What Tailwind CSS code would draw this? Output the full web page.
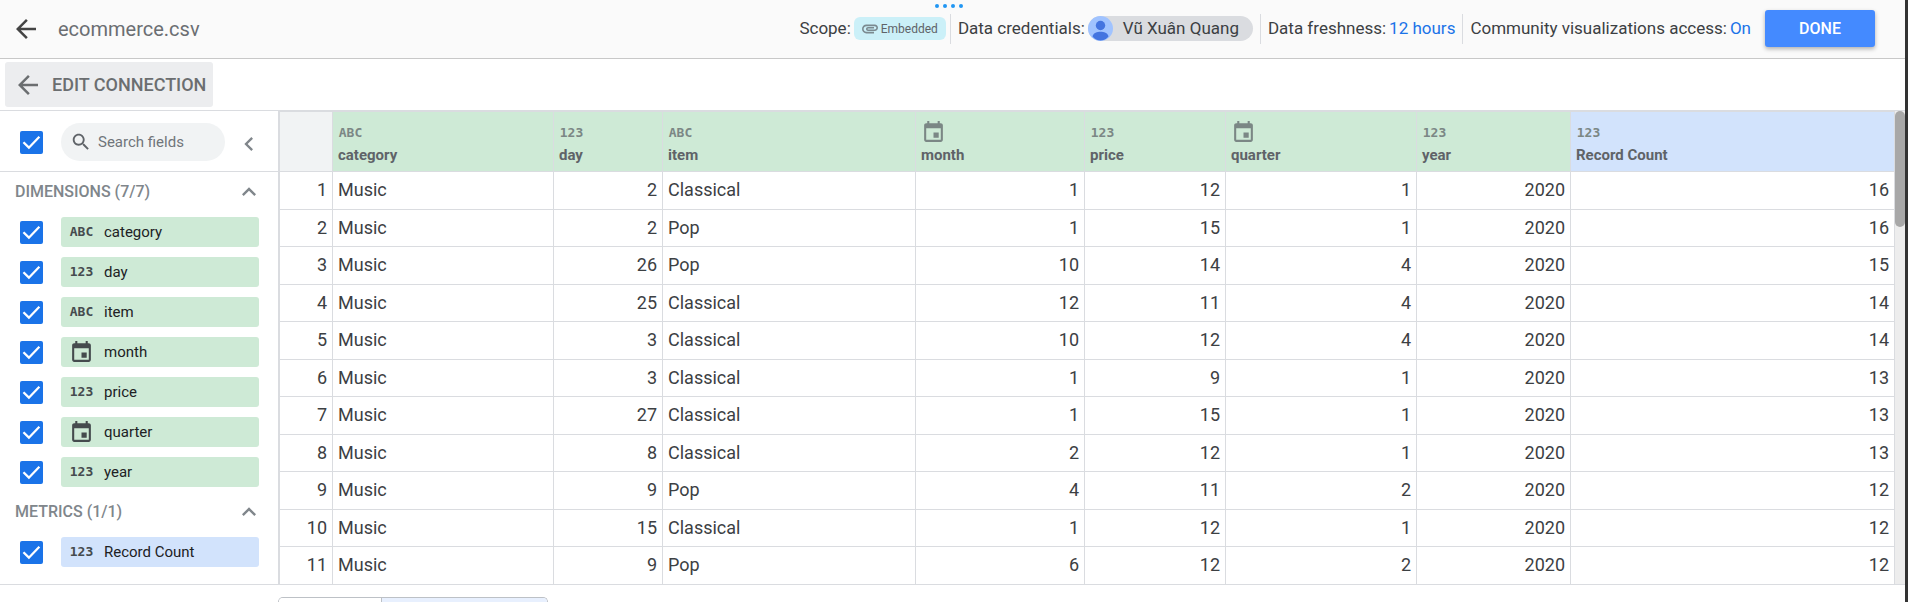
<!DOCTYPE html>
<html lang="en">
<head>
<meta charset="utf-8">
<title>ecommerce.csv</title>
<script src="https://cdn.jsdelivr.net/npm/@tailwindcss/browser@4"></script>
</head>
<body class="flex h-screen overflow-hidden bg-[#333] pr-[3px] font-['Roboto',sans-serif] text-[#3c4043]">
<svg class="hidden" aria-hidden="true">
  <symbol id="back" viewBox="0 0 24 24"><path d="M20 11H7.830l5.590-5.590L12 4l-8 8 8 8 1.410-1.410L7.830 13H20v-2z"/></symbol>
  <symbol id="calendar" viewBox="0 0 24 24"><path d="M17 12h-5v5h5v-5zM16 1v2H8V1H6v2H5c-1.110 0-1.990.9-1.990 2L3 19c0 1.100.890 2 2 2h14c1.100 0 2-.9 2-2V5c0-1.100-.9-2-2-2h-1V1h-2zm3 18H5V8h14v11z"/></symbol>
  <symbol id="up" viewBox="0 0 24 24"><path d="M12 8l-6 6 1.410 1.410L12 10.830l4.590 4.580L18 14z"/></symbol>
  <symbol id="left" viewBox="0 0 24 24"><path d="M15.410 7.410L14 6l-6 6 6 6 1.410-1.410L10.830 12z"/></symbol>
  <symbol id="search" viewBox="0 0 24 24"><path d="M15.500 14h-.79l-.28-.27C15.410 12.590 16 11.110 16 9.500 16 5.910 13.090 3 9.500 3S3 5.910 3 9.500 5.910 16 9.500 16c1.610 0 3.090-.59 4.230-1.570l.27.28v.79l5 4.990L20.490 19l-4.990-5zm-6 0C7.010 14 5 11.990 5 9.500S7.010 5 9.500 5 14 7.010 14 9.500 11.990 14 9.500 14z"/></symbol>
  <symbol id="clip" viewBox="2 4 20 17"><path d="M2 12.500C2 9.460 4.460 7 7.500 7H18c2.210 0 4 1.790 4 4s-1.790 4-4 4H9.500C8.120 15 7 13.880 7 12.500S8.120 10 9.500 10H17v2H9.410c-.55 0-.55 1 0 1H18c1.100 0 2-.9 2-2s-.9-2-2-2H7.500C5.570 9 4 10.570 4 12.500S5.570 16 7.500 16H17v2H7.500C4.460 18 2 15.540 2 12.500z"/></symbol>
  <symbol id="tick" viewBox="0 0 24 24"><path d="M3.600 11.700l5.700 5.700L20.200 6" fill="none" stroke="#fff" stroke-width="2.400"/></symbol>
</svg>

<div class="flex min-w-0 flex-1 flex-col bg-white">
  <header class="relative flex h-[59px] shrink-0 items-center border-b border-[#c8c8c8] bg-[#fafafa] pr-[30px] pb-px pl-3">
    <div class="absolute top-1 left-1/2 flex -translate-x-1/2 gap-1 pr-2" aria-hidden="true">
      <i class="size-1 rounded-full bg-[#2196f3]"></i><i class="size-1 rounded-full bg-[#2196f3]"></i><i class="size-1 rounded-full bg-[#2196f3]"></i><i class="size-1 rounded-full bg-[#2196f3]"></i>
    </div>
    <button aria-label="Back" class="flex size-7 items-center justify-center"><svg class="size-[30px] shrink-0 fill-[#444]"><use href="#back"/></svg></button>
    <h1 class="ml-[18px] text-xl text-[#6b6e72]">ecommerce.csv</h1>
    <div class="ml-auto flex items-center text-[17px] whitespace-nowrap">
      <div class="flex h-[30px] items-center gap-[3px] border-r border-[#dadce0] pr-1">
        <span>Scope:</span>
        <span class="flex h-[23px] items-center gap-[3px] rounded-md bg-[#cbf0f8] px-2 text-xs text-[#5f6368]"><svg class="size-4 fill-[#7b8a90]"><use href="#clip"/></svg>Embedded</span>
      </div>
      <div class="flex h-[30px] items-center gap-[3px] border-r border-[#dadce0] px-[7px]">
        <span>Data credentials:</span>
        <span class="flex h-[25px] items-center gap-[10px] rounded-full bg-[#dadce0] pr-[14px]">
          <svg class="size-[25px] rounded-full" viewBox="0 0 25 25"><path fill="#a0c3ff" d="M0 0h25v25H0z"/><circle cx="12.500" cy="9.500" r="4.700" fill="#4374e0"/><path fill="#4374e0" d="M4.500 20.500c1-4 4.500-4.800 8-4.800s7 .8 8 4.800c-2 2.700-5 4-8 4s-6-1.300-8-4z"/></svg>
          Vũ Xuân Quang
        </span>
      </div>
      <div class="flex h-[30px] items-center gap-[3px] border-r border-[#dadce0] px-[7px]"><span>Data freshness:</span><a href="#" class="text-[#1a73e8]">12 hours</a></div>
      <div class="flex h-[30px] items-center gap-[3px] pr-[14px] pl-[7px]"><span>Community visualizations access:</span><a href="#" class="text-[#1a73e8]">On</a></div>
      <button class="h-[37px] w-[110px] rounded-[3px] bg-[#448aff] text-base font-medium text-white shadow-[0_2px_4px_rgba(0,0,0,0.3)]">DONE</button>
    </div>
  </header>

  <div class="flex h-[51px] shrink-0 items-center px-[5px]">
    <button class="flex h-[45px] items-center gap-[9px] rounded-[3px] bg-[#ecedef] pr-[7px] pl-2 text-lg font-medium text-[#6b6e70]"><svg class="size-[30px] fill-[#6b6e70]"><use href="#back"/></svg>EDIT CONNECTION</button>
  </div>

  <main class="flex h-[475px] shrink-0 border-y border-[#dadce0]">
    <aside class="w-[280px] shrink-0 border-r-2 border-[#dadce0]">
      <div class="flex h-[61px] items-center border-b border-[#dadce0] pt-[2px] pl-5">
        <label class="grid size-[23px] place-items-center"><input type="checkbox" checked aria-label="Select all fields" class="col-start-1 row-start-1 size-[23px] appearance-none rounded-[2px] bg-[#1a73e8]"><svg class="pointer-events-none col-start-1 row-start-1 size-[23px]"><use href="#tick"/></svg></label>
        <label class="ml-[18px] flex h-[38px] w-[164px] items-center rounded-full bg-[#f1f3f4] pl-[9px]">
          <svg class="size-[22px] shrink-0 fill-[#5f6368]"><use href="#search"/></svg>
          <input type="text" aria-label="Search fields" placeholder="Search fields" class="ml-1.5 w-full min-w-0 bg-transparent text-[15px] outline-none placeholder:text-[#70757a]">
        </label>
        <button aria-label="Collapse panel" class="ml-[10px] pt-1"><svg class="size-7 fill-[#80868b]"><use href="#left"/></svg></button>
      </div>
      <div class="flex h-10 items-center justify-between pr-[15px] pl-[15px] text-base font-medium text-[#80868b]"><h2>DIMENSIONS (7/7)</h2><button aria-label="Collapse dimensions"><svg class="size-[28px] fill-[#80868b]"><use href="#up"/></svg></button></div>
      <div id="dimensions"></div>
      <div class="flex h-10 items-center justify-between pr-[15px] pl-[15px] text-base font-medium text-[#80868b]"><h2>METRICS (1/1)</h2><button aria-label="Collapse metrics"><svg class="size-[28px] fill-[#80868b]"><use href="#up"/></svg></button></div>
      <div id="metrics"></div>
    </aside>
    <div class="min-w-0 flex-1">
      <table class="w-full table-fixed border-separate border-spacing-0 text-lg">
        <colgroup><col class="w-[53px]"><col class="w-[221px]"><col class="w-[109px]"><col class="w-[253px]"><col class="w-[169px]"><col class="w-[141px]"><col class="w-[191px]"><col class="w-[154px]"><col></colgroup>
        <thead><tr id="head"></tr></thead>
        <tbody id="rows"></tbody>
      </table>
    </div>
    <div class="w-[10px] shrink-0 bg-[#ededed]"><div class="h-[116px] rounded-full bg-[#a8a8a8]"></div></div>
  </main>

  <div class="mt-3 ml-[278px] flex min-h-0 w-[270px] flex-1 overflow-hidden rounded-t-md border border-b-0 border-[#bdc1c6]">
    <button aria-label="First view" class="w-[103px] border-r border-[#bdc1c6] bg-white"></button>
    <button aria-label="Second view" class="flex-1 bg-[#e8f0fe]"></button>
  </div>
</div>

<script>
const fields = [['category','ABC'],['day','123'],['item','ABC'],['month','cal'],['price','123'],['quarter','cal'],['year','123'],['Record Count','123']];
const icon = t => t === 'cal'
  ? '<svg class="size-[25px] fill-current"><use href="#calendar"/></svg>'
  : `<span class="font-['DejaVu_Sans_Mono',monospace] text-[13px] font-bold">${t}</span>`;
const fieldRow = ([name, type], color) => `
  <label class="flex h-10 items-center pr-[19px] pl-5">
    <span class="grid size-[23px] shrink-0 place-items-center"><input type="checkbox" checked class="col-start-1 row-start-1 size-[23px] appearance-none rounded-[2px] bg-[#1a73e8]"><svg class="pointer-events-none col-start-1 row-start-1 size-[23px]"><use href="#tick"/></svg></span>
    <span class="ml-[18px] flex h-[30px] flex-1 items-center gap-[10px] rounded-[3px] pl-2 text-[15px] text-[#202124] ${color}"><span class="flex w-[25px] items-center justify-center text-[#454b4e]">${icon(type)}</span>${name}</span>
  </label>`;
document.getElementById('dimensions').innerHTML = fields.slice(0, 7).map(f => fieldRow(f, 'bg-[#ceead6]')).join('');
document.getElementById('metrics').innerHTML = fieldRow(fields[7], 'bg-[#d2e3fc]');

document.getElementById('head').innerHTML =
  '<td class="h-[61px] border-t border-r border-b border-[#dadce0] bg-[#f1f3f4]"></td>' +
  fields.map(([name, type], i) => `
  <th scope="col" class="h-[61px] border-t border-r border-b border-[#dadce0] pl-[5px] text-left align-top text-[15px] leading-5 font-bold text-[#5f6368] ${i < 7 ? 'bg-[#ceead6]' : 'bg-[#d2e3fc]'}">
    <div class="mt-2 flex h-[25px] w-[25px] items-center justify-center text-[#7b8785]">${icon(type)}</div><div>${name}</div></th>`).join('');

const data = [
  [2,'Classical',1,12,1,16],[2,'Pop',1,15,1,16],[26,'Pop',10,14,4,15],[25,'Classical',12,11,4,14],
  [3,'Classical',10,12,4,14],[3,'Classical',1,9,1,13],[27,'Classical',1,15,1,13],[8,'Classical',2,12,1,13],
  [9,'Pop',4,11,2,12],[15,'Classical',1,12,1,12],[9,'Pop',6,12,2,12]];
document.getElementById('rows').innerHTML = data.map(([day, item, month, price, quarter, count], i) =>
  `<tr class="${i % 2 ? 'h-[37px]' : 'h-[38px]'}">` +
  [i + 1, 'Music', day, item, month, price, quarter, 2020, count].map(v =>
    `<td class="border-r border-b border-[#dadce0] px-[5px] pt-1.5 pb-0 align-top leading-6 ${typeof v === 'number' ? 'text-right' : 'text-left'}">${v}</td>`).join('') + '</tr>').join('');
</script>
</body>
</html>
